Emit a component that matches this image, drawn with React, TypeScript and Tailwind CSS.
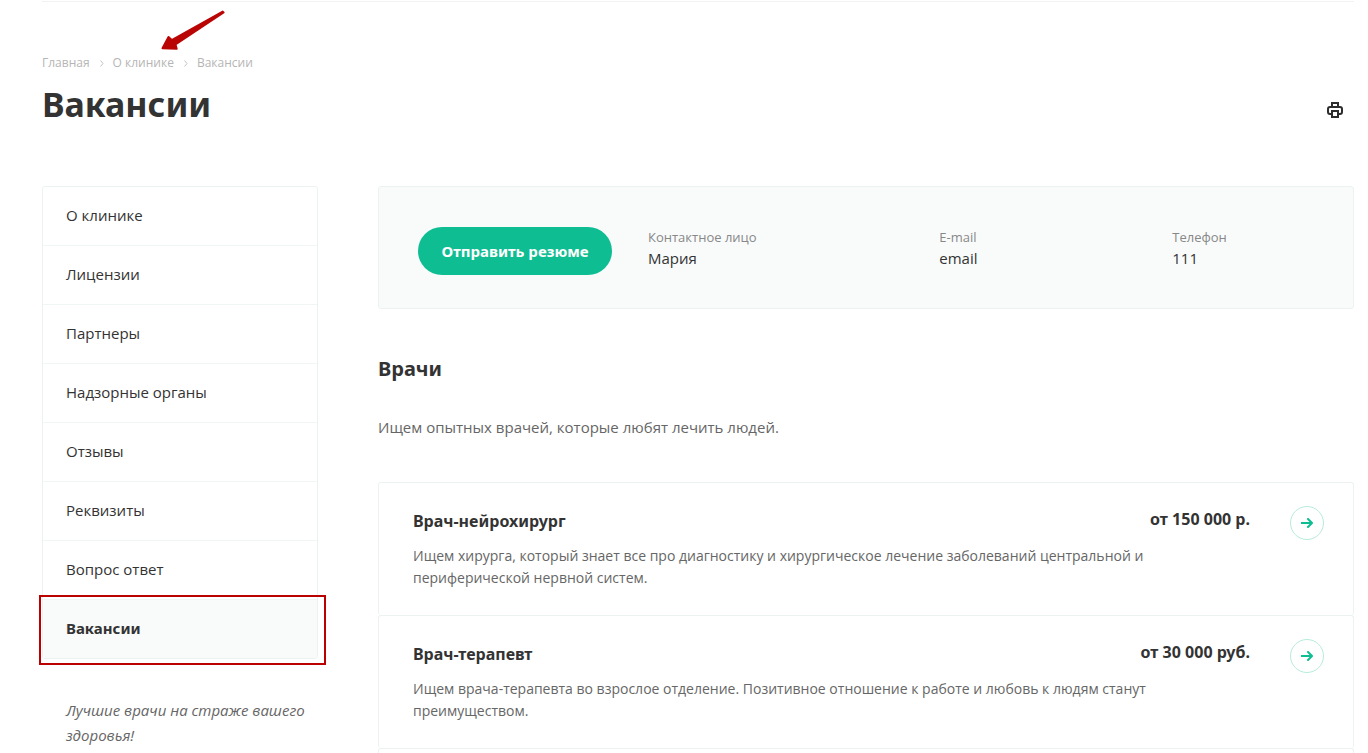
const crumbs = ["Главная", "О клинике", "Вакансии"]

const menu = [
  "О клинике",
  "Лицензии",
  "Партнеры",
  "Надзорные органы",
  "Отзывы",
  "Реквизиты",
  "Вопрос ответ",
  "Вакансии",
]

const contacts = [
  { label: "Контактное лицо", value: "Мария" },
  { label: "E-mail", value: "email" },
  { label: "Телефон", value: "111" },
]

const vacancies = [
  {
    title: "Врач-нейрохирург",
    salary: "от 150 000 р.",
    text: "Ищем хирурга, который знает все про диагностику и хирургическое лечение заболеваний центральной и периферической нервной систем.",
  },
  {
    title: "Врач-терапевт",
    salary: "от 30 000 руб.",
    text: "Ищем врача-терапевта во взрослое отделение. Позитивное отношение к работе и любовь к людям станут преимуществом.",
  },
]

function CrumbArrow() {
  return (
    <svg width="4" height="7" viewBox="0 0 4 7" fill="none" stroke="#c4c4c4" aria-hidden="true">
      <path d="M0.5 0.5 3 3.5 0.5 6.5" />
    </svg>
  )
}

function PrinterIcon() {
  return (
    <svg width="16" height="16" viewBox="0 0 16 16" fill="none" stroke="#2d2d2d" strokeWidth="2" aria-hidden="true">
      <path d="M5 5V1h6v4" />
      <path d="M4 12H3a2 2 0 0 1-2-2V7a2 2 0 0 1 2-2h10a2 2 0 0 1 2 2v3a2 2 0 0 1-2 2h-1" />
      <path d="M5 9h6v6H5z" />
    </svg>
  )
}

function ArrowIcon() {
  return (
    <svg width="12" height="10" viewBox="0 0 12 10" fill="none" stroke="currentColor" strokeWidth="2" aria-hidden="true">
      <path d="M0 5h11" />
      <path d="M7 1l4 4-4 4" strokeLinecap="round" strokeLinejoin="round" />
    </svg>
  )
}

function RedPointer() {
  return (
    <svg
      className="pointer-events-none absolute -top-[47px] left-[59px]"
      width="68"
      height="44"
      viewBox="0 0 68 44"
      fill="#b90504"
      stroke="#b90504"
      strokeWidth="2"
      strokeLinejoin="round"
      aria-hidden="true"
    >
      <path d="M3.500 41.200 9.500 30l3.200 3L63.700 4.600l.9.900L16.500 37.500l1.200 4.200z" />
    </svg>
  )
}

export default function App() {
  return (
    <div className="bg-white pr-3.5 pl-[42px] font-['Open_Sans',sans-serif] text-[#333]">
      <header className="border-b border-[#f2f2f2] pt-px" />

      <nav aria-label="Навигация" className="pt-[52px]">
        <ol className="flex items-center gap-2.5 text-xs leading-[18px] text-[#b6b5b5]">
          {crumbs.map((crumb, i) => (
            <li key={crumb} className="relative flex items-center gap-[9px]">
              {i > 0 && <CrumbArrow />}
              <a href="#">{crumb}</a>
              {i === 1 && <RedPointer />}
            </li>
          ))}
        </ol>
      </nav>

      <div className="flex items-center justify-between pt-2 pr-[11px]">
        <h1 className="font-['Noto_Sans',sans-serif] text-[34px] leading-[48px] font-bold">Вакансии</h1>
        <button type="button" aria-label="Печать" className="pt-3">
          <PrinterIcon />
        </button>
      </div>

      <div className="flex items-start gap-[60px] pt-[58px]">
        <aside className="w-[276px] shrink-0">
          <ul className="rounded-[3px] border border-[#ecf2f2] text-[15px] leading-[22px]">
            {menu.map((item, i) =>
              i === menu.length - 1 ? (
                <li key={item} className="relative bg-[#f9fbfb]">
                  <a
                    href="#"
                    aria-current="page"
                    className="block px-[23px] pt-[17px] pb-[19px] font-['Noto_Sans',sans-serif] font-bold"
                  >
                    {item}
                  </a>
                  <span className="pointer-events-none absolute -top-[5px] -right-[9px] -bottom-[7px] -left-1 border-2 border-[#b00]" />
                </li>
              ) : (
                <li key={item} className="border-b border-[#f0f5f5]">
                  <a href="#" className="block px-[23px] pt-[17px] pb-[19px]">
                    {item}
                  </a>
                </li>
              ),
            )}
          </ul>
          <p className="pt-[39px] pl-6 text-[15px] leading-[25px] text-[#666] italic">
            Лучшие врачи на страже вашего здоровья!
          </p>
        </aside>

        <main className="min-w-0 flex-1">
          <section className="flex items-start gap-9 rounded-[3px] border border-[#ecf2f2] bg-[#f9fbfb] pt-10 pr-1.5 pb-[33px] pl-[39px]">
            <button
              type="button"
              className="h-12 w-[194px] shrink-0 rounded-full bg-[#0fbd92] font-['Noto_Sans',sans-serif] text-[15px] font-bold text-white"
            >
              Отправить резюме
            </button>
            <dl className="grid flex-1 grid-cols-[5fr_4fr_3fr]">
              {contacts.map((c) => (
                <div key={c.label}>
                  <dt className="text-[13px] leading-5 text-[#888]">{c.label}</dt>
                  <dd className="text-[15px] leading-[22px]">{c.value}</dd>
                </div>
              ))}
            </dl>
          </section>

          <h2 className="pt-[46px] font-['Noto_Sans',sans-serif] text-xl leading-7 font-bold">Врачи</h2>
          <p className="pt-8 text-[15px] leading-[25px] text-[#666]">
            Ищем опытных врачей, которые любят лечить людей.
          </p>

          <ul className="pt-[42px]">
            {vacancies.map((v) => (
              <li
                key={v.title}
                className="flex items-start rounded-[3px] border border-b-0 border-[#ecf2f2] pt-[23px] pr-[29px] pb-[26px] pl-[34px]"
              >
                <div className="min-w-0 flex-1">
                  <div className="flex justify-between font-['Noto_Sans',sans-serif] text-base leading-[22px] font-bold">
                    <h3 className="pt-1">{v.title}</h3>
                    <span className="pt-0.5">{v.salary}</span>
                  </div>
                  <p className="max-w-[770px] pt-[13px] text-sm leading-[22px] text-[#666]">{v.text}</p>
                </div>
                <a
                  href="#"
                  aria-label={v.title}
                  className="ml-10 flex size-[34px] items-center justify-center rounded-full border border-[#b7ebde] text-[#0fbd92]"
                >
                  <ArrowIcon />
                </a>
              </li>
            ))}
            <li className="h-[5px] rounded-t-[3px] border border-b-0 border-[#ecf2f2]" />
          </ul>
        </main>
      </div>
    </div>
  )
}
